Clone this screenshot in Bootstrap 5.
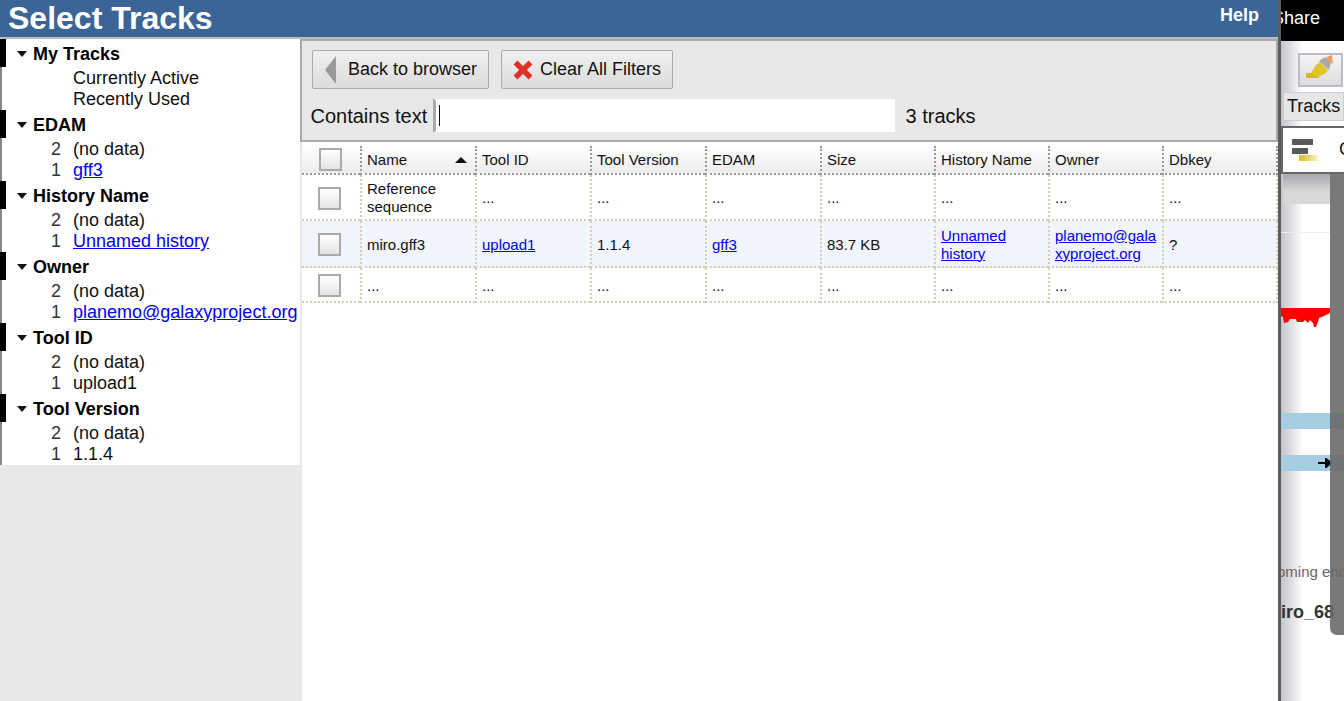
<!DOCTYPE html>
<html lang="en">
<head>
    <meta charset="UTF-8">
    <meta name="viewport" content="width=device-width, initial-scale=1.0">
    <title>Select Tracks</title>
    <link href="https://cdn.jsdelivr.net/npm/bootstrap@5.3.2/dist/css/bootstrap.min.css" rel="stylesheet">
    <script src="https://cdn.jsdelivr.net/npm/bootstrap@5.3.2/dist/js/bootstrap.bundle.min.js"></script>
    <style>
        html, body { height: 701px; overflow: hidden; }
        body { font-family: "Liberation Sans", Arial, sans-serif; color: #111; background: #fff; }
        a { color: #00e; }

        .page-wrap { width: 1344px; height: 701px; }
        .dialog { width: 1281px; height: 701px; border-right: 3px solid #5c5c5c; flex: none; }

        .top-bar { height: 39px; background: #3a6595; border-bottom: 2px solid #bbb; padding: 0 19px 0 8px; color: #fff; font-weight: 700; }
        .top-title { font-size: 32px; line-height: 37px; }
        .top-help { font-size: 18px; line-height: 30px; }

        .side { width: 302px; flex: none; background: #e8e8e8; }
        .side-list { width: 300px; background: #fff; border-left: 2px solid #888; height: 426px; }
        .side-group { height: 71px; }
        .side-head { height: 28px; margin-left: -2px; margin-bottom: 1px; border-left: 6px solid #000; padding-left: 11px; padding-top: 2px; font-size: 18px; font-weight: 700; color: #000; }
        .caret-down { width: 0; height: 0; border: 5.5px solid transparent; border-top: 6px solid #111; border-bottom: 0; margin-right: 6px; }
        .side-item { height: 21px; line-height: 21px; font-size: 18px; }
        .side-count { width: 59px; text-align: right; color: #333; flex: none; }
        .side-label { margin-left: 12px; white-space: nowrap; }

        .main { width: 976px; flex: none; background: #fff; }
        .tool-box { height: 103px; margin-left: -2px; background: #e8e8e8; border: 2px solid #aaa; padding: 9px 10px 0 9px; }
        .tool-row { margin-left: 1px; }
        .tool-btn { height: 39px; padding: 0 11px 0 12px; font-size: 18px; color: #111; background: linear-gradient(#f0f0f0, #dcdcdc); border: 1px solid #aaa; border-radius: 2px; }
        .tool-btn:hover { color: #111; background: linear-gradient(#f0f0f0, #dcdcdc); border-color: #aaa; }
        .clear-btn { margin-left: 4px; padding-left: 11px; padding-right: 11px; }
        .clear-icon { margin-right: 7px; }
        .search-row { margin-top: 10px; height: 33px; }
        .search-label { font-size: 20px; width: 122px; flex: none; margin-left: -0.5px; }
        .search-box { width: 459px; height: 33px; background: #fff; padding: 0 3px; flex: none; }
        .search-edge { width: 3px; height: 35px; border-left: 3px solid #aaa; border-top: 3px solid transparent; border-bottom: 3px solid transparent; flex: none; }
        .cursor-bar { width: 1px; height: 21px; background: #111; }
        .search-count { font-size: 20px; margin-left: 11px; }

        .track-table { margin: 4px 0 0 0; width: 976px; table-layout: fixed; font-size: 15px; line-height: 18px; border-collapse: separate; border-spacing: 0; }
        .track-table > :not(caption) > * > * { padding: 0 3px 0 5px; box-shadow: none; border: 0; background: transparent; color: #111; vertical-align: middle; word-break: break-all; }
        .track-table > tbody > tr > td { padding-top: 2px; }
        .track-table th { font-weight: 400; height: 29px; background: linear-gradient(#fff, #ececec) !important; border-bottom: 2px dotted #999 !important; border-left: 2px dotted #999 !important; word-break: normal !important; }
        .track-table th:first-child, .track-table td:first-child { border-left: 0 !important; }
        .track-table th:last-child { border-right: 2px dotted #999 !important; }
        .track-table td { border-bottom: 2px dotted #d6cfb8 !important; border-left: 2px dotted #d6cfb8 !important; }
        .track-table td:last-child { border-right: 2px dotted #d6cfb8 !important; }
        .track-table td.word-cell { word-break: normal; }
        .track-table tr.row-alt td { background: #f1f4fa; }
        .track-table a { color: #00e; }
        .row-a td { height: 46px; }
        .row-b td { height: 47px; }
        .row-c td { height: 35px; }
        .check-box { width: 23px; height: 23px; margin-left: 11px; border: 2px solid #aaa; background: linear-gradient(#fff, #e4e4e4); }
        .check-head { margin-left: 12px; }
        .sort-up { width: 0; height: 0; border: 6px solid transparent; border-bottom: 6px solid #111; border-top: 0; margin-right: 5px; }

        .behind { width: 63px; height: 701px; flex: none; overflow: hidden; position: relative; background: linear-gradient(90deg, #c4c4cc, #fff 22px); }
        .behind-top { height: 41px; background: #000; color: #fff; font-size: 18px; line-height: 37px; white-space: nowrap; margin-left: -9px; }
        .pen-btn { position: absolute; left: 17px; top: 53px; width: 45px; height: 34px; background: linear-gradient(#f4f4f4, #ddd); border: 2px solid #bbc; }
        .tracks-tab { position: absolute; left: 2px; top: 92px; width: 61px; height: 29px; background: #e6e6e6; border: 1px solid #ccc; font-size: 18px; line-height: 27px; padding-left: 3px; overflow: hidden; white-space: nowrap; }
        .legend-box { position: absolute; left: 0; top: 126px; width: 63px; height: 48px; background: #fff; border: 2px solid #666; border-right: 0; overflow: hidden; }
        .legend-bar { position: absolute; height: 6px; background: #5a5a5a; }
        .legend-fade { left: 16px; top: 27px; width: 21px; height: 6px; background: linear-gradient(90deg, #d8bc20, #f4eeb0 80%, #fff); }
        .legend-c { position: absolute; left: 56px; top: 11px; font-size: 18px; line-height: 21px; }
        .band { position: absolute; left: 0; width: 63px; height: 16px; background: #a6cee3; }
        .red-wave { position: absolute; left: 0; top: 308px; }
        .band-arrow { position: absolute; left: 37px; top: 458px; }
        .faint-text { position: absolute; left: -4px; top: 561px; color: #666; font-size: 15px; white-space: nowrap; }
        .label-text { position: absolute; left: 0; top: 599px; font-weight: 700; color: #333; font-size: 18px; white-space: nowrap; }
        .top-shade { position: absolute; left: 2px; top: 174px; width: 47px; height: 30px; background: linear-gradient(#a8a8ac, #d8d8d8 60%); }
        .thin-line { position: absolute; left: 0; top: 232px; width: 49px; height: 1px; background: #eee; }
        .scroll-thumb { position: absolute; left: 49px; top: 172px; width: 14px; height: 463px; background: #666; border-radius: 0 0 0 7px; opacity: .88; }
    </style>
</head>
<body>
    <div class="page-wrap d-flex">
        <div class="dialog d-flex flex-column">
            <div class="top-bar d-flex justify-content-between">
                <div class="top-title">Select Tracks</div>
                <a class="top-help text-white text-decoration-none" href="#">Help</a>
            </div>
            <div class="d-flex flex-grow-1">
                <div class="side">
                    <div class="side-list">
                        <div class="side-group">
                            <div class="side-head d-flex align-items-center"><span class="caret-down"></span>My Tracks</div>
                            <div class="side-item d-flex"><span class="side-count"></span><span class="side-label">Currently Active</span></div>
                            <div class="side-item d-flex"><span class="side-count"></span><span class="side-label">Recently Used</span></div>
                        </div>
                        <div class="side-group">
                            <div class="side-head d-flex align-items-center"><span class="caret-down"></span>EDAM</div>
                            <div class="side-item d-flex"><span class="side-count">2</span><span class="side-label">(no data)</span></div>
                            <div class="side-item d-flex"><span class="side-count">1</span><span class="side-label"><a href="#">gff3</a></span></div>
                        </div>
                        <div class="side-group">
                            <div class="side-head d-flex align-items-center"><span class="caret-down"></span>History Name</div>
                            <div class="side-item d-flex"><span class="side-count">2</span><span class="side-label">(no data)</span></div>
                            <div class="side-item d-flex"><span class="side-count">1</span><span class="side-label"><a href="#">Unnamed history</a></span></div>
                        </div>
                        <div class="side-group">
                            <div class="side-head d-flex align-items-center"><span class="caret-down"></span>Owner</div>
                            <div class="side-item d-flex"><span class="side-count">2</span><span class="side-label">(no data)</span></div>
                            <div class="side-item d-flex"><span class="side-count">1</span><span class="side-label"><a href="#">planemo@galaxyproject.org</a></span></div>
                        </div>
                        <div class="side-group">
                            <div class="side-head d-flex align-items-center"><span class="caret-down"></span>Tool ID</div>
                            <div class="side-item d-flex"><span class="side-count">2</span><span class="side-label">(no data)</span></div>
                            <div class="side-item d-flex"><span class="side-count">1</span><span class="side-label">upload1</span></div>
                        </div>
                        <div class="side-group">
                            <div class="side-head d-flex align-items-center"><span class="caret-down"></span>Tool Version</div>
                            <div class="side-item d-flex"><span class="side-count">2</span><span class="side-label">(no data)</span></div>
                            <div class="side-item d-flex"><span class="side-count">1</span><span class="side-label">1.1.4</span></div>
                        </div>
                    </div>
                </div>

                <div class="main">
                    <div class="tool-box">
                        <div class="tool-row d-flex gap-2">
                            <button class="btn tool-btn d-flex align-items-center" type="button">
                                <svg width="11" height="28" viewBox="0 0 11 28" class="me-2"><polygon points="11,0 11,28 0,14" fill="#999"/></svg>
                                <span class="ms-1">Back to browser</span>
                            </button>
                            <button class="btn tool-btn clear-btn d-flex align-items-center" type="button">
                                <svg width="20" height="20" viewBox="0 0 20 20" class="clear-icon"><path d="M2.5 2.5 L17.5 17.5 M17.5 2.5 L2.5 17.5" stroke="#e03028" stroke-width="5.5"/></svg>
                                <span>Clear All Filters</span>
                            </button>
                        </div>
                        <div class="search-row d-flex align-items-center">
                            <span class="search-label">Contains text</span>
                            <span class="search-edge"></span>
                            <div class="search-box d-flex align-items-center"><span class="cursor-bar"></span></div>
                            <span class="search-count">3 tracks</span>
                        </div>
                    </div>

                    <table class="table track-table">
                        <colgroup>
                            <col style="width:58px"><col style="width:115px"><col style="width:115px"><col style="width:115px">
                            <col style="width:115px"><col style="width:114px"><col style="width:114px"><col style="width:114px"><col style="width:116px">
                        </colgroup>
                        <thead>
                            <tr>
                                <th><div class="check-box check-head"></div></th>
                                <th><div class="d-flex justify-content-between align-items-center"><span>Name</span><span class="sort-up"></span></div></th>
                                <th>Tool ID</th>
                                <th>Tool Version</th>
                                <th>EDAM</th>
                                <th>Size</th>
                                <th>History Name</th>
                                <th>Owner</th>
                                <th>Dbkey</th>
                            </tr>
                        </thead>
                        <tbody>
                            <tr class="row-a">
                                <td><div class="check-box"></div></td>
                                <td class="word-cell">Reference sequence</td>
                                <td>...</td><td>...</td><td>...</td><td>...</td><td>...</td><td>...</td><td>...</td>
                            </tr>
                            <tr class="row-b row-alt">
                                <td><div class="check-box"></div></td>
                                <td>miro.gff3</td>
                                <td><a href="#">upload1</a></td>
                                <td>1.1.4</td>
                                <td><a href="#">gff3</a></td>
                                <td>83.7 KB</td>
                                <td class="word-cell"><a href="#">Unnamed history</a></td>
                                <td><a href="#">planemo@galaxyproject.org</a></td>
                                <td>?</td>
                            </tr>
                            <tr class="row-c">
                                <td><div class="check-box"></div></td>
                                <td>...</td><td>...</td><td>...</td><td>...</td><td>...</td><td>...</td><td>...</td><td>...</td>
                            </tr>
                        </tbody>
                    </table>
                </div>
            </div>
        </div>

        <div class="behind">
            <div class="behind-top">Share</div>
            <div class="pen-btn">
                <svg width="41" height="30" viewBox="0 0 41 30">
                    <rect x="6" y="18" width="13" height="5" fill="#d4b824"/>
                    <polygon points="11,18 16,10 20,7 28,15 25,19 17,22" fill="#e2c52e"/>
                    <polygon points="19,6 25,2 31,7 29,15" fill="#a9a9a9"/>
                    <polygon points="26,2 32,0 33,9 30,7" fill="#ef9f55"/>
                </svg>
            </div>
            <div class="tracks-tab">Tracks</div>
            <div class="legend-box">
                <span class="legend-bar" style="left:9px;top:11px;width:21px"></span>
                <span class="legend-bar" style="left:9px;top:20px;width:16px"></span>
                <span class="legend-bar legend-fade"></span>
                <span class="legend-c">C</span>
            </div>
            <div class="top-shade"></div>
            <div class="thin-line"></div>
            <svg class="red-wave" width="49" height="20" viewBox="0 0 49 20"><polygon points="0,0 49,0 49,5 43,8 38,10 37,14 35,19 33,19 32,15 29,12 27,15 24,12 22,14 16,14 15,11 9,11 7,14 3,15 2,9 0,8" fill="#f00"/></svg>
            <div class="band" style="top:413px"></div>
            <div class="band" style="top:455px"></div>
            <svg class="band-arrow" width="14" height="10" viewBox="0 0 14 10"><path d="M0 5 H9 M8 1 L13 5 L8 9 Z" stroke="#000" stroke-width="2" fill="#000"/></svg>
            <div class="faint-text">oming end</div>
            <div class="label-text">iro_68</div>
            <div class="scroll-thumb"></div>
        </div>
    </div>
</body>
</html>
